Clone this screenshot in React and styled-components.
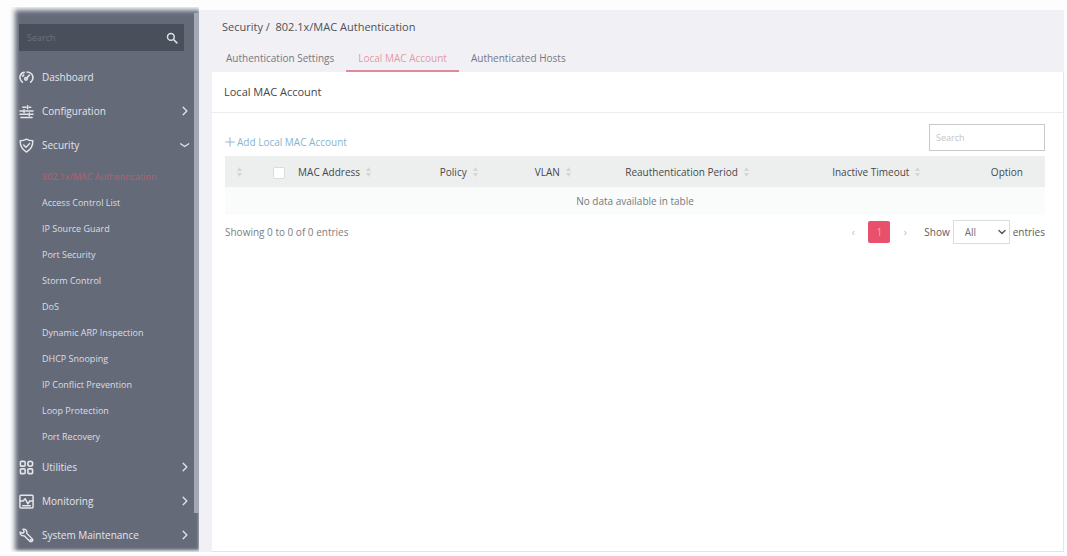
import React, { useState } from 'react';
import styled, { createGlobalStyle } from 'styled-components';

const GlobalStyle = createGlobalStyle`
  * {
    box-sizing: border-box;
  }
  body {
    margin: 0;
    background: #fdfdfd;
    color: #5b5c61;
    font-family: 'Open Sans', 'Noto Sans', sans-serif;
    font-size: 10px;
    line-height: 16px;
  }
  button, input, select {
    font-family: inherit;
    font-size: inherit;
  }
`;

const Layout = styled.div`
  display: flex;
  min-height: 100vh;
  padding: 10px 3px 4px 10px;
`;

const Sidebar = styled.aside`
  display: flex;
  flex-shrink: 0;
  width: 189px;
  margin-top: -3px;
  background: #656a79;
  box-shadow: inset 5px 3px 5px #f8fafa, inset 0 -2px 3px #dfe2e6;
`;

const SidebarBody = styled.div`
  flex: 1;
  padding: 17px 4px 0 9px;
`;

const ScrollTrack = styled.div`
  width: 5px;
  margin-top: 6px;
`;

const ScrollThumb = styled.div`
  height: 500px;
  background: #a5a8b7;
`;

const SideSearch = styled.label`
  display: flex;
  align-items: center;
  height: 27px;
  margin: 0 6px 9px 0;
  padding: 0 6px 0 8px;
  background: #4a505b;
  color: #dfe1e6;
`;

const SideInput = styled.input`
  flex: 1;
  min-width: 0;
  padding: 0;
  border: none;
  outline: none;
  background: none;
  color: #dfe1e6;
  font-size: 9px;
  &::placeholder {
    color: #6b717b;
    opacity: 1;
  }
`;

const MenuButton = styled.button`
  display: flex;
  align-items: center;
  gap: 8px;
  width: 100%;
  height: 34px;
  padding: 0;
  border: none;
  background: none;
  color: #e3e5ea;
  text-align: left;
  cursor: pointer;
`;

const MenuLabel = styled.span`
  flex: 1;
`;

const SubMenu = styled.ul`
  margin: 0;
  padding: 2px 0 0 23px;
  list-style: none;
`;

const SubLink = styled.a`
  display: block;
  color: ${({ $active }) => ($active ? '#b5606c' : '#dcdee4')};
  font-size: 9px;
  line-height: 26px;
  text-decoration: none;
  white-space: nowrap;
`;

const Main = styled.main`
  flex: 1;
  display: flex;
  flex-direction: column;
  min-width: 0;
  padding-left: 13px;
  background: #f0f0f5;
`;

const Breadcrumb = styled.h1`
  margin: 0;
  padding: 9px 10px 0;
  color: #4f5055;
  font-size: 11px;
  font-weight: 400;
  line-height: 16px;
  white-space: pre;
`;

const Tabs = styled.nav`
  display: flex;
  padding-left: 2px;
`;

const Tab = styled.a`
  height: 37px;
  padding: 15px 12px 0;
  border-bottom: 2px solid ${({ $active }) => ($active ? '#e08a98' : 'transparent')};
  color: ${({ $active }) => ($active ? '#e59aa6' : '#77787f')};
  text-decoration: none;
`;

const Card = styled.section`
  flex: 1;
  background: #fff;
  border-right: 1px solid #e6e6e8;
  border-bottom: 1px solid #e3e3ea;
`;

const CardTitle = styled.h2`
  margin: 0;
  padding: 0 12px;
  border-bottom: 1px solid #ececee;
  color: #45464a;
  font-size: 11px;
  font-weight: 400;
  line-height: 40px;
`;

const CardBody = styled.div`
  padding: 11px 18px 0 13px;
`;

const Toolbar = styled.div`
  display: flex;
  align-items: flex-end;
  justify-content: space-between;
  padding-bottom: 5px;
`;

const AddButton = styled.button`
  display: flex;
  align-items: center;
  gap: 2px;
  height: 18px;
  padding: 0;
  border: none;
  background: none;
  color: #86b5cc;
  cursor: pointer;
`;

const SearchInput = styled.input`
  width: 116px;
  height: 27px;
  padding: 0 6px;
  border: 1px solid #c9c9cb;
  background: #fff;
  color: #5b5c61;
  font-size: 9px;
  outline: none;
  &::placeholder {
    color: #c4c4c6;
    opacity: 1;
  }
`;

const Table = styled.table`
  width: 100%;
  border-collapse: collapse;
  table-layout: fixed;
`;

const Th = styled.th`
  width: ${({ $width }) => $width}px;
  height: 31px;
  padding: 0 ${({ $align }) => ($align === 'left' ? 6 : 0)}px;
  background: #edefef;
  color: #47484c;
  font-weight: 400;
  text-align: ${({ $align }) => $align || 'center'};
  white-space: nowrap;
`;

const EmptyCell = styled.td`
  height: 28px;
  padding: 0;
  background: #fafcfc;
  color: #77787c;
  text-align: center;
`;

const SortMark = styled.svg`
  margin-left: 5px;
  vertical-align: -1px;
`;

const Checkbox = styled.input`
  display: block;
  appearance: none;
  width: 12px;
  height: 12px;
  margin: 2px auto 0;
  border: 1px solid #dcdcde;
  border-radius: 2px;
  background: #fff;
`;

const TableFooter = styled.div`
  display: flex;
  align-items: center;
  justify-content: space-between;
  padding-top: 5px;
`;

const Info = styled.div`
  color: #7d7e82;
`;

const Controls = styled.div`
  display: flex;
  align-items: center;
`;

const PageButton = styled.button`
  width: ${({ $active }) => ($active ? 22 : 30)}px;
  height: 22px;
  padding: 0;
  border: none;
  border-radius: 2px;
  background: ${({ $active }) => ($active ? '#e8506c' : 'transparent')};
  color: ${({ $active }) => ($active ? '#f6a5b3' : '#b9b9bc')};
`;

const LengthLabel = styled.label`
  display: flex;
  align-items: center;
  gap: 3px;
  margin-left: 4px;
  white-space: nowrap;
`;

const SelectWrap = styled.span`
  display: flex;
  align-items: center;
  width: 57px;
  height: 24px;
  padding-right: 3px;
  border: 1px solid #dcdcde;
`;

const Select = styled.select`
  flex: 1;
  min-width: 0;
  height: 22px;
  padding: 0 0 0 11px;
  border: none;
  outline: none;
  appearance: none;
  background: none;
  color: #6e6f73;
`;

const Glyph = ({ size = 15, width = 1.5, children }) => (
  <svg
    width={size}
    height={size}
    viewBox="0 0 16 16"
    fill="none"
    stroke="currentColor"
    strokeWidth={width}
    strokeLinecap="round"
    strokeLinejoin="round"
    aria-hidden="true"
  >
    {children}
  </svg>
);

const icons = {
  dashboard: (
    <Glyph width={1.7}>
      <path d="M3.5 13C-.5 9.500.5 3.500 5.500 2.500M8.500 2.200C15.500 2.800 16.500 9.500 12.500 13" />
      <path d="M4 6.500l1-1M11 5.500L8.300 8.500" />
      <circle cx="7.400" cy="9.400" r="1.400" />
    </Glyph>
  ),
  configuration: (
    <Glyph width={1.6}>
      <path d="M4 3.500h3.500M11 3.500h1.500M9.200 1.800v3.200M1 7.500h3M7 7.500h8M5.400 6v3M1 11h8.500M12.500 11H15M11 9.600v2.800M2 14.500h12" />
    </Glyph>
  ),
  security: (
    <Glyph>
      <path d="M8 1.2C6 2.4 3.6 3 1.2 3c0 5.6 2.2 9.4 6.8 12 4.6-2.6 6.8-6.4 6.8-12C12.4 3 10 2.4 8 1.2z" />
      <path d="M5 7.5L7.4 10 11.3 5.8" />
    </Glyph>
  ),
  utilities: (
    <Glyph width={1.7}>
      <rect x="1.500" y="1.500" width="5" height="5" rx="1" />
      <rect x="1.500" y="9.500" width="5" height="5" rx="1" />
      <circle cx="12" cy="4" r="2.600" />
      <rect x="9.500" y="9.500" width="5" height="5" rx="1" />
    </Glyph>
  ),
  monitoring: (
    <Glyph width={1.6}>
      <rect x="1" y="1.2" width="14" height="13.6" rx="1" />
      <path d="M1 7.5h3.5L6.5 5l3 5.5L11.5 7.5H15M4 12.5h8" />
    </Glyph>
  ),
  maintenance: (
    <Glyph>
      <path d="M4.3 1.3L5.6 4 4 5.6 1.2 4.4C.8 7 3 8.9 5.5 8.2l6 6c1.8 1.6 4.2-.8 2.7-2.6l-6-6C9 2.8 6.800.7 4.3 1.3z" />
      <circle cx="12.6" cy="12.8" r=".5" />
    </Glyph>
  ),
};

const menu = [
  { id: 'dashboard', label: 'Dashboard' },
  { id: 'configuration', label: 'Configuration', expandable: true },
  {
    id: 'security',
    label: 'Security',
    expandable: true,
    children: [
      '802.1x/MAC Authentication',
      'Access Control List',
      'IP Source Guard',
      'Port Security',
      'Storm Control',
      'DoS',
      'Dynamic ARP Inspection',
      'DHCP Snooping',
      'IP Conflict Prevention',
      'Loop Protection',
      'Port Recovery',
    ],
  },
  { id: 'utilities', label: 'Utilities', expandable: true },
  { id: 'monitoring', label: 'Monitoring', expandable: true },
  { id: 'maintenance', label: 'System Maintenance', expandable: true },
];

const tabs = ['Authentication Settings', 'Local MAC Account', 'Authenticated Hosts'];

const columns = [
  { label: 'MAC Address', width: 110, align: 'left' },
  { label: 'Policy', width: 114 },
  { label: 'VLAN', width: 74 },
  { label: 'Reauthentication Period', width: 194 },
  { label: 'Inactive Timeout', width: 184 },
];

const Sort = () => (
  <SortMark width="7" height="10" viewBox="0 0 7 10" fill="#d3d5d6" aria-hidden="true">
    <path d="M3.5 0L6 4H1zM3.5 10L1 6h5z" />
  </SortMark>
);

const App = () => {
  const [open, setOpen] = useState('security');
  const [activeTab, setActiveTab] = useState('Local MAC Account');

  return (
    <>
      <GlobalStyle />
      <Layout>
        <Sidebar>
          <SidebarBody>
            <SideSearch>
              <SideInput placeholder="Search" aria-label="Search menu" />
              <Glyph size={12} width={2}>
                <circle cx="6.5" cy="6.5" r="4.5" />
                <path d="M10 10l4.5 4.5" />
              </Glyph>
            </SideSearch>
            {menu.map(({ id, label, expandable, children }) => (
              <React.Fragment key={id}>
                <MenuButton onClick={() => setOpen(open === id ? '' : id)}>
                  {icons[id]}
                  <MenuLabel>{label}</MenuLabel>
                  {expandable && (
                    <Glyph size={10} width={2}>
                      <path d={open === id ? 'M1 6l6.500 4.500L14 6' : 'M5 2l6 6-6 6'} />
                    </Glyph>
                  )}
                </MenuButton>
                {children && open === id && (
                  <SubMenu>
                    {children.map((item, i) => (
                      <li key={item}>
                        <SubLink href="#" $active={i === 0}>{item}</SubLink>
                      </li>
                    ))}
                  </SubMenu>
                )}
              </React.Fragment>
            ))}
          </SidebarBody>
          <ScrollTrack>
            <ScrollThumb />
          </ScrollTrack>
        </Sidebar>

        <Main>
          <Breadcrumb>{'Security /  802.1x/MAC Authentication'}</Breadcrumb>
          <Tabs>
            {tabs.map((tab) => (
              <Tab
                key={tab}
                href="#"
                $active={tab === activeTab}
                onClick={() => setActiveTab(tab)}
              >
                {tab}
              </Tab>
            ))}
          </Tabs>
          <Card>
            <CardTitle>Local MAC Account</CardTitle>
            <CardBody>
              <Toolbar>
                <AddButton>
                  <Glyph size={10}>
                    <path d="M8 1v14M1 8h14" />
                  </Glyph>
                  Add Local MAC Account
                </AddButton>
                <SearchInput placeholder="Search" aria-label="Search table" />
              </Toolbar>
              <Table>
                <thead>
                  <tr>
                    <Th $width={41} $align="left"><Sort /></Th>
                    <Th $width={26}>
                      <Checkbox type="checkbox" aria-label="Select all" />
                    </Th>
                    {columns.map(({ label, width, align }) => (
                      <Th key={label} $width={width} $align={align}>
                        {label}
                        <Sort />
                      </Th>
                    ))}
                    <Th $width={76}>Option</Th>
                  </tr>
                </thead>
                <tbody>
                  <tr>
                    <EmptyCell colSpan={8}>No data available in table</EmptyCell>
                  </tr>
                </tbody>
              </Table>
              <TableFooter>
                <Info>Showing 0 to 0 of 0 entries</Info>
                <Controls>
                  <PageButton aria-label="Previous page">‹</PageButton>
                  <PageButton $active>1</PageButton>
                  <PageButton aria-label="Next page">›</PageButton>
                  <LengthLabel>
                    Show
                    <SelectWrap>
                      <Select defaultValue="All">
                        <option>All</option>
                        <option>10</option>
                        <option>25</option>
                      </Select>
                      <Glyph size={8} width={3}>
                        <path d="M2 5l6 6 6-6" />
                      </Glyph>
                    </SelectWrap>
                    entries
                  </LengthLabel>
                </Controls>
              </TableFooter>
            </CardBody>
          </Card>
        </Main>
      </Layout>
    </>
  );
};

export default App;
